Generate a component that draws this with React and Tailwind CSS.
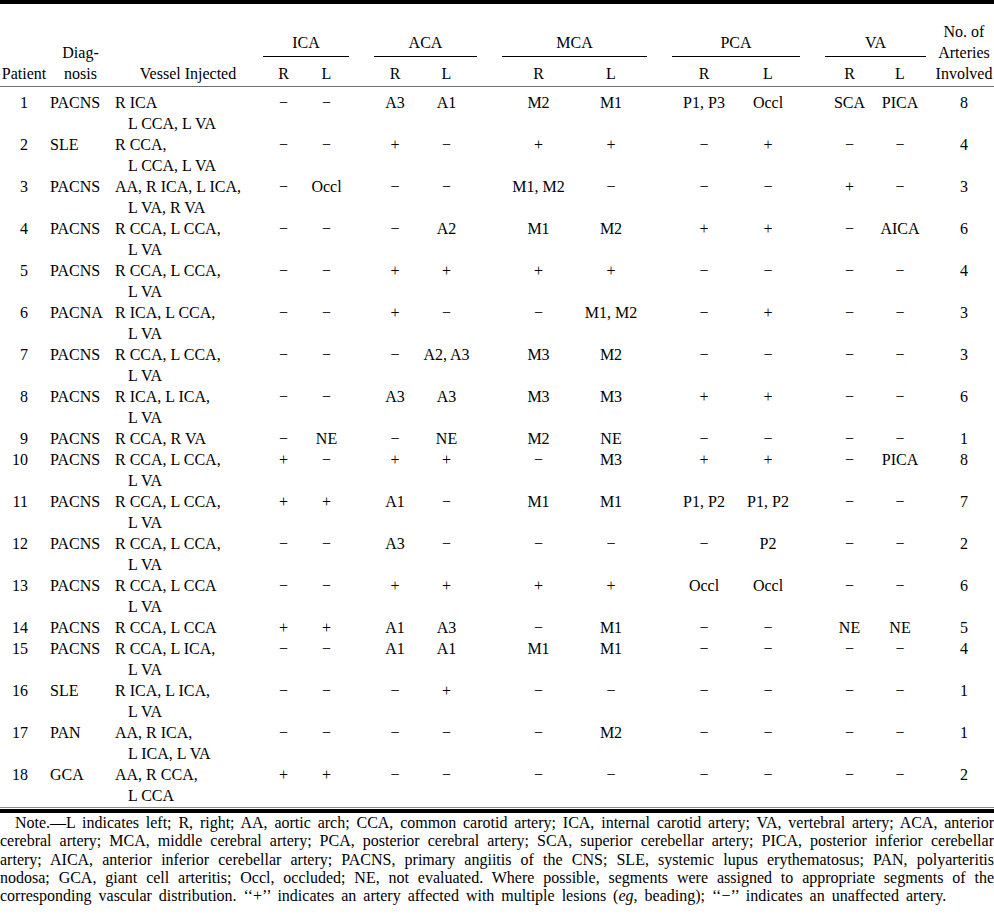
const COLS =
  "grid grid-cols-[48px_65px_150px_41px_45px_25px_42px_61px_25px_73px_72px_25px_64px_64px_25px_49px_52px_8px_60px]";

const M = "−";

const rows = [
  [1, "PACNS", ["R ICA", "L CCA, L VA"], M, M, "A3", "A1", "M2", "M1", "P1, P3", "Occl", "SCA", "PICA", 8],
  [2, "SLE", ["R CCA,", "L CCA, L VA"], M, M, "+", M, "+", "+", M, "+", M, M, 4],
  [3, "PACNS", ["AA, R ICA, L ICA,", "L VA, R VA"], M, "Occl", M, M, "M1, M2", M, M, M, "+", M, 3],
  [4, "PACNS", ["R CCA, L CCA,", "L VA"], M, M, M, "A2", "M1", "M2", "+", "+", M, "AICA", 6],
  [5, "PACNS", ["R CCA, L CCA,", "L VA"], M, M, "+", "+", "+", "+", M, M, M, M, 4],
  [6, "PACNA", ["R ICA, L CCA,", "L VA"], M, M, "+", M, M, "M1, M2", M, "+", M, M, 3],
  [7, "PACNS", ["R CCA, L CCA,", "L VA"], M, M, M, "A2, A3", "M3", "M2", M, M, M, M, 3],
  [8, "PACNS", ["R ICA, L ICA,", "L VA"], M, M, "A3", "A3", "M3", "M3", "+", "+", M, M, 6],
  [9, "PACNS", ["R CCA, R VA"], M, "NE", M, "NE", "M2", "NE", M, M, M, M, 1],
  [10, "PACNS", ["R CCA, L CCA,", "L VA"], "+", M, "+", "+", M, "M3", "+", "+", M, "PICA", 8],
  [11, "PACNS", ["R CCA, L CCA,", "L VA"], "+", "+", "A1", M, "M1", "M1", "P1, P2", "P1, P2", M, M, 7],
  [12, "PACNS", ["R CCA, L CCA,", "L VA"], M, M, "A3", M, M, M, M, "P2", M, M, 2],
  [13, "PACNS", ["R CCA, L CCA", "L VA"], M, M, "+", "+", "+", "+", "Occl", "Occl", M, M, 6],
  [14, "PACNS", ["R CCA, L CCA"], "+", "+", "A1", "A3", M, "M1", M, M, "NE", "NE", 5],
  [15, "PACNS", ["R CCA, L ICA,", "L VA"], M, M, "A1", "A1", "M1", "M1", M, M, M, M, 4],
  [16, "SLE", ["R ICA, L ICA,", "L VA"], M, M, M, "+", M, M, M, M, M, M, 1],
  [17, "PAN", ["AA, R ICA,", "L ICA, L VA"], M, M, M, M, M, "M2", M, M, M, M, 1],
  [18, "GCA", ["AA, R CCA,", "L CCA"], "+", "+", M, M, M, M, M, M, M, M, 2],
];

function Group({ label }) {
  return (
    <div className="col-span-2 flex items-end justify-center border-b border-black pb-[3px]">
      {label}
    </div>
  );
}

function DataRow({ row }) {
  const [n, dx, vessel, ...rest] = row;
  const v = rest.slice(0, 10);
  const total = rest[10];
  return (
    <div className={COLS}>
      <div className="pr-[20px] text-right">{n}</div>
      <div className="pl-[2px]">{dx}</div>
      <div className="whitespace-nowrap pl-[2px]">
        {vessel.map((line, i) => (
          <div key={i} className={i ? "pl-[13px]" : ""}>
            {line}
          </div>
        ))}
      </div>
      <div className="text-center">{v[0]}</div>
      <div className="text-center">{v[1]}</div>
      <div />
      <div className="text-center">{v[2]}</div>
      <div className="text-center whitespace-nowrap">{v[3]}</div>
      <div />
      <div className="text-center whitespace-nowrap">{v[4]}</div>
      <div className="text-center whitespace-nowrap">{v[5]}</div>
      <div />
      <div className="text-center whitespace-nowrap">{v[6]}</div>
      <div className="text-center whitespace-nowrap">{v[7]}</div>
      <div />
      <div className="text-center">{v[8]}</div>
      <div className="text-center">{v[9]}</div>
      <div />
      <div className="text-center">{total}</div>
    </div>
  );
}

export default function App() {
  return (
    <div className="w-[994px] bg-white font-['Liberation_Serif',serif] text-[16px] leading-[21px] text-black">
      {/* top rule */}
      <div className="h-[4px] bg-black" />

      {/* column heads */}
      <div className={COLS + " grid-rows-[53px_29px]"}>
        <div className="row-span-2 flex items-end justify-center pb-[2px]">Patient</div>
        <div className="row-span-2 flex flex-col items-center justify-end pb-[2px]">
          <span>Diag-</span>
          <span>nosis</span>
        </div>
        <div className="row-span-2 flex items-end justify-center pb-[2px] whitespace-nowrap">
          Vessel Injected
        </div>
        <Group label="ICA" />
        <div className="row-span-2" />
        <Group label="ACA" />
        <div className="row-span-2" />
        <Group label="MCA" />
        <div className="row-span-2" />
        <Group label="PCA" />
        <div className="row-span-2" />
        <Group label="VA" />
        <div className="row-span-2" />
        <div className="row-span-2 flex flex-col items-center justify-end pb-[2px] whitespace-nowrap">
          <span>No. of</span>
          <span>Arteries</span>
          <span>Involved</span>
        </div>
        {["R", "L", "R", "L", "R", "L", "R", "L", "R", "L"].map((s, i) => (
          <div key={i} className="flex items-end justify-center pb-[2px]">
            {s}
          </div>
        ))}
      </div>
      <div className="h-px bg-[#707070]" />

      {/* body */}
      <div className="pt-[5px]">
        {rows.map((r) => (
          <DataRow key={r[0]} row={r} />
        ))}
      </div>

      {/* bottom rules */}
      <div className="mt-[1px] h-px bg-[#8a8a8a]" />
      <div className="mt-[1px] h-[4px] bg-black" />

      {/* footnote, set line by line as in the print */}
      <div className="pt-[1px] text-[16px] leading-[18.3px]">
        <p className="indent-[15px] text-justify [text-align-last:justify]">
          Note.—L indicates left; R, right; AA, aortic arch; CCA, common carotid artery; ICA,
          internal carotid artery; VA, vertebral artery; ACA, anterior
        </p>
        <p className="text-justify [text-align-last:justify]">
          cerebral artery; MCA, middle cerebral artery; PCA, posterior cerebral artery; SCA,
          superior cerebellar artery; PICA, posterior inferior cerebellar
        </p>
        <p className="text-justify [text-align-last:justify]">
          artery; AICA, anterior inferior cerebellar artery; PACNS, primary angiitis of the CNS;
          SLE, systemic lupus erythematosus; PAN, polyarteritis
        </p>
        <p className="text-justify [text-align-last:justify]">
          nodosa; GCA, giant cell arteritis; Occl, occluded; NE, not evaluated. Where possible,
          segments were assigned to appropriate segments of the
        </p>
        <p className="[word-spacing:3px]">
          corresponding vascular distribution. ‘‘+’’ indicates an artery affected with multiple
          lesions (<i>eg,</i> beading); ‘‘−’’ indicates an unaffected artery.
        </p>
      </div>
    </div>
  );
}
